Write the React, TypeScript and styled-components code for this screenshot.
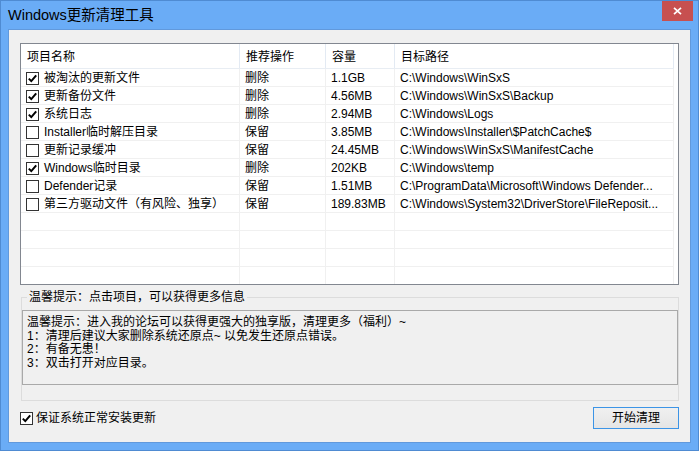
import React from 'react'
import styled, { createGlobalStyle } from 'styled-components'

const GlobalStyle = createGlobalStyle`
  html, body {
    margin: 0;
    padding: 0;
    background: #ffffff;
  }
  body {
    font-family: "Liberation Sans", "Noto Sans CJK SC", sans-serif;
    font-size: 12px;
    color: #000;
  }
`

const FONT = `"Liberation Sans", "Noto Sans CJK SC", sans-serif`

const Window = styled.div`
  width: 699px;
  height: 451px;
  box-sizing: border-box;
  background: #6aacf6;
  border: 1px solid #4f8bd2;
  display: flex;
  flex-direction: column;
`

const TitleBar = styled.div`
  height: 28px;
  flex: none;
  display: flex;
  justify-content: space-between;
  align-items: flex-start;
  padding-left: 7px;
  padding-right: 5px;
`

const Title = styled.div`
  font-family: ${FONT};
  font-size: 14.5px;
  line-height: 28px;
  color: #000;
`

const CloseButton = styled.div`
  width: 31px;
  height: 20px;
  background: #c75050;
  display: flex;
  align-items: center;
  justify-content: center;
`

const Client = styled.div`
  flex: 1;
  margin: 0 7px 7px 7px;
  background: #f0f0f0;
  border: 1px solid #6199dc;
  padding: 13px 11px 0 11px;
  display: flex;
  flex-direction: column;
`

const ListBox = styled.div`
  height: 242px;
  box-sizing: border-box;
  border: 1px solid #828790;
  background: #fff;
  overflow: hidden;
`

const GridRow = styled.div<{ $header?: boolean }>`
  display: grid;
  grid-template-columns: 219px 86px 69px 279px;
  width: 653px;
  height: ${p => (p.$header ? 25 : 18)}px;
  box-sizing: border-box;
  border-bottom: 1px solid ${p => (p.$header ? '#e8edf3' : '#f0f0f0')};
`

const HeaderCell = styled.div`
  border-right: 1px solid #e3eaf3;
  padding: 2px 0 0 6px;
  display: flex;
  align-items: center;
  white-space: nowrap;
  line-height: 14px;
`

const Cell = styled.div`
  border-right: 1px solid #f0f0f0;
  padding: 1px 0 0 5px;
  display: flex;
  align-items: center;
  gap: 5px;
  white-space: nowrap;
  overflow: hidden;
  line-height: 14px;
`

const Box = styled.span`
  width: 13px;
  height: 13px;
  box-sizing: border-box;
  border: 1px solid #333;
  background: #fff;
  flex: none;
  display: inline-flex;
`

const GroupBox = styled.fieldset`
  margin: 5px 0 0 1px;
  padding: 6px 0 15px 0;
  border: 1px solid #dcdcdc;
  min-width: 0;
`

const Legend = styled.legend`
  margin-left: 5px;
  padding: 0 2px;
  line-height: 14px;
  font-size: 12px;
`

const Memo = styled.div`
  height: 75px;
  box-sizing: border-box;
  border: 1px solid #a9a9a9;
  background: #f0f0f0;
  padding: 5px 4px;
`

const MemoLine = styled.div`
  line-height: 13.5px;
  white-space: nowrap;
`

const Footer = styled.div`
  margin-top: 6px;
  display: flex;
  justify-content: space-between;
  align-items: center;
`

const FooterCheck = styled.label`
  display: flex;
  align-items: center;
  gap: 3px;
  line-height: 14px;
`

const Button = styled.div`
  width: 86px;
  height: 22px;
  box-sizing: border-box;
  border: 1px solid #3c94e6;
  background: linear-gradient(#f0f0f0, #e5e5e5);
  display: flex;
  align-items: center;
  justify-content: center;
  line-height: 14px;
`

interface Item {
  name: string
  op: string
  size: string
  path: string
  checked: boolean
}

const items: Item[] = [
  { name: '被淘汰的更新文件', op: '删除', size: '1.1GB', path: 'C:\\Windows\\WinSxS', checked: true },
  { name: '更新备份文件', op: '删除', size: '4.56MB', path: 'C:\\Windows\\WinSxS\\Backup', checked: true },
  { name: '系统日志', op: '删除', size: '2.94MB', path: 'C:\\Windows\\Logs', checked: true },
  { name: 'Installer临时解压目录', op: '保留', size: '3.85MB', path: 'C:\\Windows\\Installer\\$PatchCache$', checked: false },
  { name: '更新记录缓冲', op: '保留', size: '24.45MB', path: 'C:\\Windows\\WinSxS\\ManifestCache', checked: false },
  { name: 'Windows临时目录', op: '删除', size: '202KB', path: 'C:\\Windows\\temp', checked: true },
  { name: 'Defender记录', op: '保留', size: '1.51MB', path: 'C:\\ProgramData\\Microsoft\\Windows Defender...', checked: false },
  { name: '第三方驱动文件（有风险、独享）', op: '保留', size: '189.83MB', path: 'C:\\Windows\\System32\\DriverStore\\FileReposit...', checked: false },
]

const CheckBox = ({ checked }: { checked: boolean }) => (
  <Box>
    {checked && (
      <svg width="11" height="11" viewBox="0 0 11 11">
        <path d="M1.8 5.6 L4.3 8.1 L9.2 2.4" fill="none" stroke="#000" strokeWidth="2" />
      </svg>
    )}
  </Box>
)

const App = () => {
  return <>
    <GlobalStyle />
    <Window>
      <TitleBar>
        <Title>Windows更新清理工具</Title>
        <CloseButton>
          <svg width="9" height="8" viewBox="0 0 9 8">
            <path d="M1 0.8 L8 7.2 M8 0.8 L1 7.2" stroke="#fff" strokeWidth="1.7" />
          </svg>
        </CloseButton>
      </TitleBar>
      <Client>
        <ListBox>
          <GridRow $header>
            <HeaderCell>项目名称</HeaderCell>
            <HeaderCell>推荐操作</HeaderCell>
            <HeaderCell>容量</HeaderCell>
            <HeaderCell>目标路径</HeaderCell>
          </GridRow>
          {items.map(item => <GridRow key={item.name}>
            <Cell><CheckBox checked={item.checked} />{item.name}</Cell>
            <Cell>{item.op}</Cell>
            <Cell>{item.size}</Cell>
            <Cell>{item.path}</Cell>
          </GridRow>)}
          {[0, 1, 2, 3].map(i => <GridRow key={'empty' + i}>
            <Cell /><Cell /><Cell /><Cell />
          </GridRow>)}
        </ListBox>
        <GroupBox>
          <Legend>温馨提示：点击项目，可以获得更多信息</Legend>
          <Memo>
            <MemoLine>温馨提示：进入我的论坛可以获得更强大的独享版，清理更多（福利）~</MemoLine>
            <MemoLine>1：清理后建议大家删除系统还原点~ 以免发生还原点错误。</MemoLine>
            <MemoLine>2：有备无患！</MemoLine>
            <MemoLine>3：双击打开对应目录。</MemoLine>
          </Memo>
        </GroupBox>
        <Footer>
          <FooterCheck><CheckBox checked />保证系统正常安装更新</FooterCheck>
          <Button>开始清理</Button>
        </Footer>
      </Client>
    </Window>
  </>
}

export default App
